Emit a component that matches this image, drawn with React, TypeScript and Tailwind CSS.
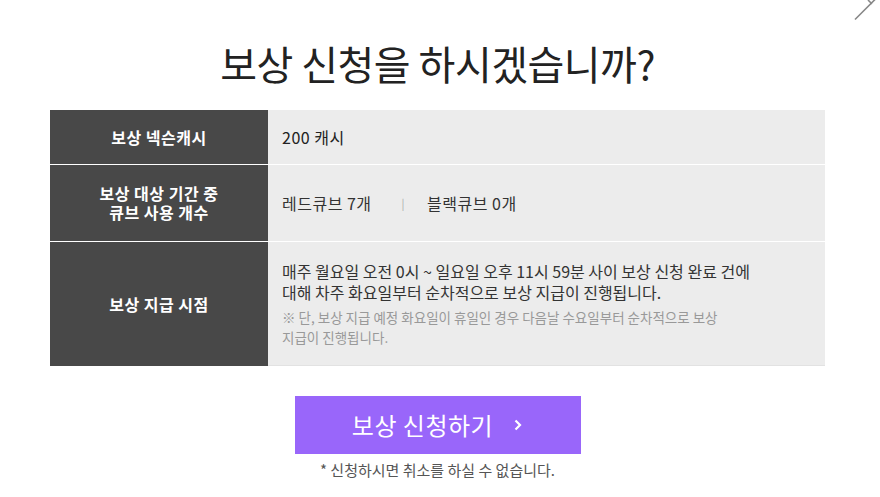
import React from "react";

const font = { fontFamily: '"Noto Sans CJK KR", "Noto Sans", sans-serif' };

export default function App() {
  return (
    <div className="relative w-[880px] h-[497px] bg-white overflow-hidden" style={font}>
      <svg className="absolute left-[850px] top-0" width="30" height="24" viewBox="0 0 30 24">
        <path d="M5 19.5 L27 -2.5 M18 0 L22 4" stroke="#888" strokeWidth="1.6" fill="none" />
      </svg>
      <div className="ml-[50px] w-[775px] flex flex-col items-center">
        <h1 className="mt-[40px] h-[46px] leading-[46px] text-[40px] tracking-[-0.5px] text-[#222] font-normal">
          보상 신청을 하시겠습니까?
        </h1>
        <div className="mt-[24px] w-full flex flex-col">
          <div className="flex h-[55px] border-b border-white">
            <div className="w-[218px] bg-[#484848] flex items-center justify-center text-white text-[16px] tracking-[0.5px] font-semibold">
              보상 넥슨캐시
            </div>
            <div className="flex-1 bg-[#ececec] flex items-center pl-[14px] text-[16px] tracking-[0.5px] text-[#222]">
              200 캐시
            </div>
          </div>
          <div className="flex h-[77px] border-b border-white">
            <div className="w-[218px] bg-[#484848] flex items-center justify-center text-center text-white text-[16px] tracking-[0.5px] font-semibold leading-[19px]">
              보상 대상 기간 중<br />큐브 사용 개수
            </div>
            <div className="flex-1 bg-[#ececec] flex items-center pl-[14px] text-[16px] tracking-[0.5px] text-[#333]">
              <span>레드큐브 7개</span>
              <span className="ml-[30px] mr-[22px] text-[#aaa] text-[11px]">|</span>
              <span>블랙큐브 0개</span>
            </div>
          </div>
          <div className="flex h-[124px]">
            <div className="w-[218px] bg-[#484848] flex items-center justify-center text-white text-[16px] tracking-[0.5px] font-semibold">
              보상 지급 시점
            </div>
            <div className="flex-1 bg-[#ececec] border-b border-[#e2e2e2] flex flex-col justify-center pl-[14px]">
              <p className="text-[16px] leading-[21px] text-[#333]">
                매주 월요일 오전 0시 ~ 일요일 오후 11시 59분 사이 보상 신청 완료 건에
                <br />
                대해 차주 화요일부터 순차적으로 보상 지급이 진행됩니다.
              </p>
              <p className="mt-[4px] text-[13.5px] leading-[20px] text-[#999]">
                ※ 단, 보상 지급 예정 화요일이 휴일인 경우 다음날 수요일부터 순차적으로 보상
                <br />
                지급이 진행됩니다.
              </p>
            </div>
          </div>
        </div>
        <button className="mt-[30px] w-[286px] h-[58px] bg-[#9966fa] flex items-center justify-center text-white text-[24px]">
          <span className="tracking-[0.5px]">보상 신청하기</span>
          <svg className="ml-[20px]" width="10" height="12" viewBox="0 0 10 12">
            <path d="M2.5 1.5 L7 6 L2.5 10.5" stroke="white" strokeWidth="2.2" fill="none" />
          </svg>
        </button>
        <p className="mt-[5px] text-[15px] text-[#555]">* 신청하시면 취소를 하실 수 없습니다.</p>
      </div>
    </div>
  );
}
